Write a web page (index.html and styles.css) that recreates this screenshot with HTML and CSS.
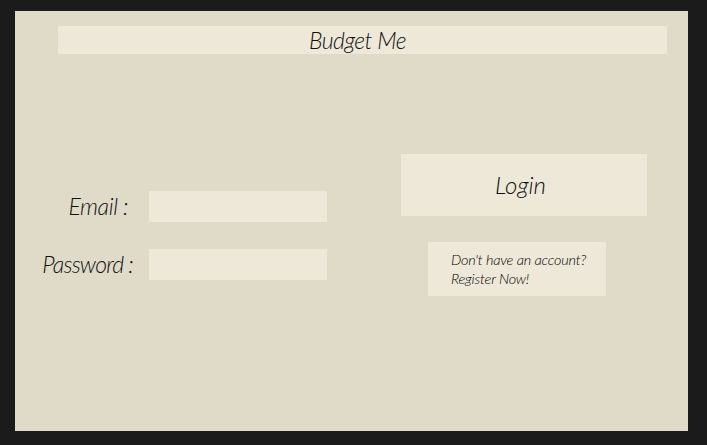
FILE: index.html
```html
<!DOCTYPE html>
<html>
<head>
<meta charset="utf-8">
<link rel="stylesheet" href="styles.css">
</head>
<body>
<div class="panel">
  <header class="title-bar"><h1 class="title">Budget Me</h1></header>
  <main class="content">
    <form class="login-form">
      <label class="label label-email" for="email">Email :</label>
      <input class="field" id="email" type="text">
      <label class="label label-password" for="password">Password :</label>
      <input class="field" id="password" type="password">
    </form>
    <div class="actions">
      <button class="login-btn" type="button">Login</button>
      <div class="register">Don't have an account?<br>Register Now!</div>
    </div>
  </main>
</div>
</body>
</html>
```
FILE: styles.css
```css
* { box-sizing: border-box; }
html, body { margin: 0; }
body {
  background: #1b1b1b;
  width: 707px;
  height: 445px;
  padding: 11px 19px 14px 15px;
  font-family: Lato, "Open Sans", sans-serif;
  font-style: italic;
  font-weight: 300;
  color: #111;
}
.panel {
  width: 673px;
  height: 420px;
  background: #e0dbc8;
  padding-top: 15px;
  display: flex;
  flex-direction: column;
}
.title-bar {
  margin-left: 43px;
  width: 609px;
  height: 28px;
  background: #ede8d8;
  display: flex;
  align-items: center;
  justify-content: center;
}
.title {
  margin: 0 0 0 -10px;
  font-size: 23px;
  font-weight: 300;
  letter-spacing: -0.5px;
}
.content {
  display: flex;
  align-items: flex-start;
}
.login-form {
  margin-top: 137px;
  display: grid;
  grid-template-columns: 118px 178px;
  column-gap: 16px;
  row-gap: 27px;
  align-items: center;
}
.label {
  text-align: right;
  font-size: 23px;
  line-height: 31px;
  letter-spacing: -0.4px;
}
.label-email { padding-right: 5px; }
.label-password { letter-spacing: -0.8px; }
.field {
  width: 178px;
  height: 31px;
  border: none;
  margin: 0;
  padding: 0 6px;
  background: #ede8d8;
  outline: none;
}
.actions {
  margin-left: 74px;
  margin-top: 100px;
  display: flex;
  flex-direction: column;
}
.login-btn {
  width: 246px;
  height: 62px;
  border: none;
  margin: 0;
  padding: 0 7px 2px 0;
  background: #ede8d8;
  font-family: inherit;
  font-style: italic;
  font-weight: 300;
  font-size: 24px;
  color: #111;
}
.register {
  margin-top: 26px;
  margin-left: 27px;
  width: 178px;
  height: 54px;
  background: #ede8d8;
  padding: 8px 0 0 23px;
  font-size: 14.5px;
  line-height: 19px;
  letter-spacing: -0.2px;
  color: #000;
}
```
